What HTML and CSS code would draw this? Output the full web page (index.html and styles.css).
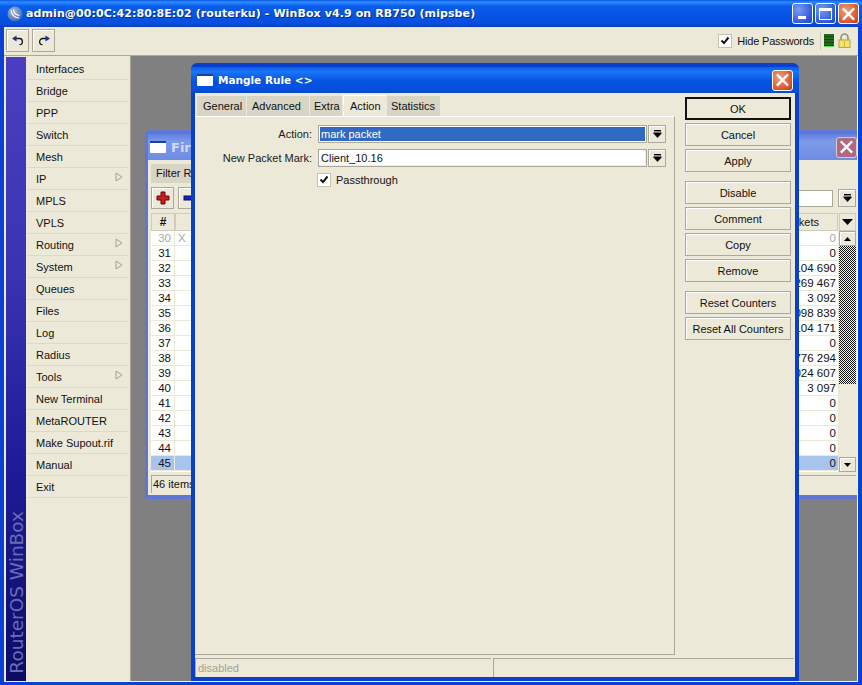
FILE: index.html
```html
<!DOCTYPE html>
<html lang="en">
<head>
<meta charset="utf-8">
<title>WinBox</title>
<link rel="stylesheet" href="styles.css">
</head>
<body>
<svg class="defs" width="0" height="0" aria-hidden="true">
  <symbol id="drop" viewBox="0 0 9 9"><rect x="1" y="0" width="7" height="1.4" fill="#000"/><path d="M0.5 2.6h8v1L4.5 8 .5 3.6z" fill="#000"/></symbol>
  <symbol id="sub" viewBox="0 0 8 10"><path d="M1 1l6 4-6 4z" fill="none" stroke="#a5a294"/></symbol>
  <symbol id="tick" viewBox="0 0 12 12"><path d="M2.5 5.500l2.500 2.600 4.500-5.600" fill="none" stroke="#111" stroke-width="2"/></symbol>
  <symbol id="win" viewBox="0 0 16 12"><rect width="16" height="12" rx="1" fill="#fff"/><rect width="16" height="2" fill="#1c3f9c"/></symbol>
  <symbol id="x" viewBox="0 0 20 20"><path d="M5 5l10 10M15 5L5 15" stroke="#fff" stroke-width="2.600" stroke-linecap="square"/></symbol>
</svg>
<div class="app">
  <header class="maintitle">
    <svg class="logo" width="16" height="16" viewBox="0 0 16 16"><defs><radialGradient id="lg" cx="40%" cy="35%" r="70%"><stop offset="0" stop-color="#a9c2ea"/><stop offset="1" stop-color="#3f62a8"/></radialGradient></defs><circle cx="8" cy="8" r="7.500" fill="url(#lg)"/><path d="M4 4c0 4 3 7.500 8 8M6.500 3.500c.2 3 2.200 5.500 6 6" fill="none" stroke="#fff" stroke-width="1.200"/></svg>
    <span class="maintitle-text">admin@00:0C:42:80:8E:02 (routerku) - WinBox v4.9 on RB750 (mipsbe)</span>
    <span class="capbtns">
      <span class="capbtn blue"><span class="min-glyph"></span></span>
      <span class="capbtn blue"><span class="max-glyph"></span></span>
      <span class="capbtn red"><svg width="20" height="20"><use href="#x"/></svg></span>
    </span>
  </header>
  <div class="toolbar">
    <button class="toolbtn"><svg width="14" height="14" viewBox="0 0 14 14"><path d="M4 4.500h4a3 3 0 0 1 .5 6.200" fill="none" stroke="#111" stroke-width="1.300"/><path d="M1 4.500L5.500 1.500v6z" fill="#1a2f8f"/></svg></button>
    <button class="toolbtn"><svg width="14" height="14" viewBox="0 0 14 14"><path d="M10 4.500H6a3 3 0 0 0-.5 6.200" fill="none" stroke="#111" stroke-width="1.300"/><path d="M13 4.500L8.500 1.500v6z" fill="#1a2f8f"/></svg></button>
    <span class="hide-pass">
      <span class="check"><svg width="12" height="12"><use href="#tick"/></svg></span>
      <span class="hide-label">Hide Passwords</span>
    </span>
    <span class="tool-sep"></span>
    <span class="meter"></span>
    <svg class="lock" width="13" height="15" viewBox="0 0 13 15"><path d="M3 7V4.500a3.500 3.500 0 0 1 7 0V7" fill="none" stroke="#8f8f80" stroke-width="1.600"/><rect x="1" y="7" width="11" height="7.500" fill="#f4e46a" stroke="#b3a552"/><rect x="6" y="7.500" width="1" height="7" fill="#c9b84a"/></svg>
  </div>
  <div class="mainbody">
    <aside class="band"><span class="band-text">RouterOS WinBox</span></aside>
    <nav class="menu">
      <div class="menu-item">Interfaces</div>
      <div class="menu-item">Bridge</div>
      <div class="menu-item">PPP</div>
      <div class="menu-item">Switch</div>
      <div class="menu-item">Mesh</div>
      <div class="menu-item">IP<svg class="sub" width="8" height="10"><use href="#sub"/></svg></div>
      <div class="menu-item">MPLS</div>
      <div class="menu-item">VPLS</div>
      <div class="menu-item">Routing<svg class="sub" width="8" height="10"><use href="#sub"/></svg></div>
      <div class="menu-item">System<svg class="sub" width="8" height="10"><use href="#sub"/></svg></div>
      <div class="menu-item">Queues</div>
      <div class="menu-item">Files</div>
      <div class="menu-item">Log</div>
      <div class="menu-item">Radius</div>
      <div class="menu-item">Tools<svg class="sub" width="8" height="10"><use href="#sub"/></svg></div>
      <div class="menu-item">New Terminal</div>
      <div class="menu-item">MetaROUTER</div>
      <div class="menu-item">Make Supout.rif</div>
      <div class="menu-item">Manual</div>
      <div class="menu-item">Exit</div>
    </nav>
    <main class="desktop">
      <section class="window firewall">
        <div class="wintitle fw-title">
          <svg width="16" height="12"><use href="#win"/></svg>
          <span>Firewall</span>
          <span class="closebtn faded"><svg width="20" height="20"><use href="#x"/></svg></span>
        </div>
        <div class="fw-body">
          <div class="fw-tabs"><span class="fw-tab">Filter Rules</span></div>
          <div class="fw-tools">
            <button class="fw-btn"><svg width="14" height="14" viewBox="0 0 14 14"><path d="M5 1h4v4h4v4H9v4H5V9H1V5h4z" fill="#d01818" stroke="#5a0a0a"/></svg></button>
            <button class="fw-btn"><svg width="14" height="14" viewBox="0 0 14 14"><rect x="1" y="5" width="12" height="4" fill="#1820c8" stroke="#0a0f60"/></svg></button>
            <span class="fw-find"></span>
            <span class="dropbtn"><svg width="9" height="9"><use href="#drop"/></svg></span>
          </div>
          <div class="fw-table">
            <div class="fw-head">
              <span class="col-num hcell">#</span>
              <span class="col-mid hcell"></span>
              <span class="col-pk hcell">Packets</span>
              <span class="col-menu hcell"><svg width="11" height="7" viewBox="0 0 11 7"><path d="M0 0h11L5.500 6z"/></svg></span>
            </div>
            <div class="fw-rows">
              <div class="fw-list">
                <div class="row off"><span class="col-num">30</span><span class="col-mid">X</span><span class="col-pk">0</span></div>
                <div class="row"><span class="col-num">31</span><span class="col-mid"></span><span class="col-pk">0</span></div>
                <div class="row"><span class="col-num">32</span><span class="col-mid"></span><span class="col-pk">104 690</span></div>
                <div class="row"><span class="col-num">33</span><span class="col-mid"></span><span class="col-pk">269 467</span></div>
                <div class="row"><span class="col-num">34</span><span class="col-mid"></span><span class="col-pk">3 092</span></div>
                <div class="row"><span class="col-num">35</span><span class="col-mid"></span><span class="col-pk">098 839</span></div>
                <div class="row"><span class="col-num">36</span><span class="col-mid"></span><span class="col-pk">104 171</span></div>
                <div class="row"><span class="col-num">37</span><span class="col-mid"></span><span class="col-pk">0</span></div>
                <div class="row"><span class="col-num">38</span><span class="col-mid"></span><span class="col-pk">776 294</span></div>
                <div class="row"><span class="col-num">39</span><span class="col-mid"></span><span class="col-pk">024 607</span></div>
                <div class="row"><span class="col-num">40</span><span class="col-mid"></span><span class="col-pk">3 097</span></div>
                <div class="row"><span class="col-num">41</span><span class="col-mid"></span><span class="col-pk">0</span></div>
                <div class="row"><span class="col-num">42</span><span class="col-mid"></span><span class="col-pk">0</span></div>
                <div class="row"><span class="col-num">43</span><span class="col-mid"></span><span class="col-pk">0</span></div>
                <div class="row"><span class="col-num">44</span><span class="col-mid"></span><span class="col-pk">0</span></div>
                <div class="row sel"><span class="col-num">45</span><span class="col-mid"></span><span class="col-pk">0</span></div>
              </div>
              <div class="scrollbar">
                <span class="sb-btn"><svg width="7" height="4" viewBox="0 0 7 4"><path d="M3.500 0L7 4H0z"/></svg></span>
                <span class="sb-hatch"></span>
                <span class="sb-track"></span>
                <span class="sb-btn"><svg width="7" height="4" viewBox="0 0 7 4"><path d="M0 0h7L3.500 4z"/></svg></span>
              </div>
            </div>
          </div>
          <div class="fw-status"><span class="fw-count">46 items</span></div>
        </div>
      </section>

      <section class="window mangle">
        <div class="wintitle">
          <svg width="16" height="12"><use href="#win"/></svg>
          <span>Mangle Rule &lt;&gt;</span>
          <span class="closebtn"><svg width="20" height="20"><use href="#x"/></svg></span>
        </div>
        <div class="mangle-body">
          <div class="mangle-main">
            <div class="mangle-left">
              <div class="tabs">
                <span class="tab">General</span>
                <span class="tab">Advanced</span>
                <span class="tab">Extra</span>
                <span class="tab active">Action</span>
                <span class="tab">Statistics</span>
              </div>
              <div class="panel">
                <div class="form">
                  <label class="flabel">Action:</label>
                  <span class="field selected">mark packet</span>
                  <span class="dropbtn"><svg width="9" height="9"><use href="#drop"/></svg></span>
                  <label class="flabel">New Packet Mark:</label>
                  <span class="field">Client_10.16</span>
                  <span class="dropbtn"><svg width="9" height="9"><use href="#drop"/></svg></span>
                  <span class="pass">
                    <span class="check"><svg width="12" height="12"><use href="#tick"/></svg></span>
                    <span>Passthrough</span>
                  </span>
                </div>
              </div>
            </div>
            <div class="actions">
              <button class="btn default">OK</button>
              <button class="btn">Cancel</button>
              <button class="btn">Apply</button>
              <button class="btn gap">Disable</button>
              <button class="btn">Comment</button>
              <button class="btn">Copy</button>
              <button class="btn">Remove</button>
              <button class="btn gap">Reset Counters</button>
              <button class="btn">Reset All Counters</button>
            </div>
          </div>
          <div class="status">
            <span class="status-cell first">disabled</span>
            <span class="status-cell second"></span>
          </div>
        </div>
      </section>
    </main>
  </div>
</div>
</body>
</html>
```

FILE: styles.css
```css
* { box-sizing: border-box; }
html, body { margin: 0; padding: 0; }
body {
  width: 862px; height: 685px; overflow: hidden;
  font: 11px "Liberation Sans", Arial, sans-serif;
  color: #111;
  background: #0a3fd0;
}
.defs { position: absolute; }
.app {
  width: 862px; height: 685px;
  display: flex; flex-direction: column;
  padding: 0 4px 3px 4px;
  background: #0a40d6;
}
.maintitle {
  height: 27px; margin: 0 -4px;
  padding: 0 3px 0 7px;
  display: flex; align-items: center; gap: 3px;
  background: linear-gradient(#0a58e6, #2f8bff 8%, #0a5eea 22%, #0553e2 60%, #0750e0 85%, #0a3fc0);
  color: #fff;
}
.maintitle-text {
  font: bold 11px "DejaVu Sans", sans-serif;
  letter-spacing: 0.1px;
  text-shadow: 1px 1px 0 #0a2a90;
  white-space: nowrap;
}
.capbtns { margin-left: auto; display: flex; gap: 2px; }
.capbtn {
  width: 21px; height: 21px;
  border: 1px solid #fff; border-radius: 3px;
  display: flex; align-items: center; justify-content: center;
  position: relative;
}
.capbtn.blue { background: radial-gradient(circle at 30% 30%, #7a9cf0, #2c55d8 75%, #2346c0); }
.capbtn.red { background: radial-gradient(circle at 35% 35%, #f0a080, #dc5a30 65%, #b83a1a); }
.min-glyph { width: 8px; height: 3px; background: #fff; position: absolute; left: 5px; bottom: 4px; }
.max-glyph { width: 13px; height: 12px; border: 1px solid #fff; border-top-width: 3px; }

.toolbar {
  height: 29px;
  padding: 2px 7px 3px 2px;
  display: flex; align-items: center; gap: 3px;
  background: #ece9d8;
  border-bottom: 1px solid #aca899;
}
.toolbtn {
  width: 23px; height: 23px; padding: 0;
  display: flex; align-items: center; justify-content: center;
  background: #ece9d8;
  border: 1px solid #aca899;
  box-shadow: inset 1px 1px 0 #fff;
}
.hide-pass { margin-left: auto; display: flex; align-items: center; gap: 6px; }
.hide-label { letter-spacing: -0.2px; }
.check {
  width: 12px; height: 12px;
  display: inline-flex;
  background: #fff;
  outline: 1px solid #c5c2b2;
}
.tool-sep { width: 1px; height: 18px; background: #d0cdbc; margin: 0 0 0 3px; }
.meter {
  width: 10px; height: 13px; margin-right: 1px;
  background: repeating-linear-gradient(#1f6a1f 0 2px, #124d12 2px 3px);
  border-bottom: 1px solid #5fe05f;
}
.mainbody {
  flex: 1; min-height: 0;
  display: flex;
  padding-left: 2px;
  background: #ece9d8;
  border-right: 1px solid #f6f4ea;
  border-bottom: 1px solid #f6f4ea;
}
.band {
  width: 20px; margin-top: 1px;
  display: flex; flex-direction: column; justify-content: flex-end; align-items: center;
  padding-bottom: 7px;
  background: linear-gradient(#4a3fc2, #3a33b0 35%, #1e1c98 65%, #0c0c66);
}
.band-text {
  writing-mode: vertical-rl; transform: rotate(180deg);
  font: 18.500px "DejaVu Sans", sans-serif;
  color: #6a6cb6;
  white-space: nowrap;
}
.menu {
  width: 105px;
  padding-top: 2px;
  border-right: 1px solid #aca899;
  background: #ece9d8;
}
.menu-item {
  height: 22px; margin: 0 2px 0 1px;
  padding: 0 0 0 9px;
  display: flex; align-items: center;
  border-bottom: 1px solid #dcd9c8;
  position: relative;
}
.sub { position: absolute; right: 5px; top: 4px; }
.desktop {
  flex: 1; min-width: 0;
  position: relative; overflow: hidden;
  background: #808080;
}
.window { position: absolute; display: flex; flex-direction: column; }
.wintitle {
  height: 26px; flex: none;
  display: flex; align-items: center; gap: 5px;
  padding: 0 2px 0 2px;
  font: bold 10.500px "DejaVu Sans", sans-serif;
  color: #fff;
  white-space: nowrap;
}
.closebtn {
  margin-left: auto;
  width: 21px; height: 21px;
  border: 1px solid #fff; border-radius: 3px;
  display: flex; align-items: center; justify-content: center;
  background: radial-gradient(circle at 35% 35%, #f0a080, #dc5a30 65%, #b83a1a);
}
.closebtn.faded { background: #b0697f; border-color: #d8c8d8; }

.firewall {
  left: 14px; top: 74px; width: 715px; height: 369px;
  background: #5f76d6;
  border: solid #5f76d6; border-width: 4px 0 4px 3px;
  border-radius: 6px 0 0 0;
}
.fw-title {
  background: linear-gradient(#5f80e0, #7d9aea 30%, #6f8ce4);
  color: #cfd9f4;
  padding-right: 3px;
  font-size: 13px;
}
.fw-body { flex: 1; min-height: 0; background: #ece9d8; display: flex; flex-direction: column; padding: 0 4px 0 3px; }
.fw-tabs { height: 25px; padding-top: 4px; flex: none; }
.fw-tab { display: inline-block; width: 80px; height: 19px; line-height: 19px; padding-left: 5px; background: #d8d5c5; }
.fw-tools { height: 26px; flex: none; display: flex; align-items: center; gap: 4px; }
.fw-btn {
  width: 23px; height: 22px; padding: 0;
  display: flex; align-items: center; justify-content: center;
  background: #ece9d8; border: 1px solid #aca899; box-shadow: inset 1px 1px 0 #fff;
}
.fw-find { margin-left: auto; width: 500px; height: 17px; background: #fff; border: 1px solid #aca899; }
.fw-table { margin-top: 2px; flex: none; }
.fw-head { display: flex; height: 18px; }
.hcell {
  height: 18px; line-height: 16px;
  background: #ece9d8; border: 1px solid #cfccbc;
  display: block;
}
.col-num { width: 24px; flex: none; text-align: right; padding-right: 3px; }
.hcell.col-num { text-align: center; padding: 0; font-weight: bold; font-size: 12px; }
.col-mid { flex: 1; min-width: 0; padding-left: 3px; }
.col-pk { width: 300px; flex: none; text-align: right; padding-right: 2px; white-space: nowrap; font-size: 11.500px; }
.hcell.col-pk { padding-right: 18px; font-size: 11px; }
.col-menu { width: 17px; flex: none; margin-left: 1px; text-align: center; }
.fw-rows { display: flex; height: 241px; }
.fw-list { flex: 1; min-width: 0; background: #fff; }
.row { display: flex; height: 15px; line-height: 14px; border-bottom: 1px solid #ece9d8; font-size: 11.500px; }
.row .col-num { border-right: 1px solid #ece9d8; }
.row.off { color: #a8a8a8; }
.row.sel { background: #a9c4ec; }
.scrollbar { width: 17px; margin-left: 1px; flex: none; display: flex; flex-direction: column; }
.sb-btn {
  height: 15px; flex: none;
  display: flex; align-items: center; justify-content: center;
  background: #ece9d8; border: 1px solid #aca899; box-shadow: inset 1px 1px 0 #fff;
}
.sb-hatch {
  height: 138px; flex: none;
  background: repeating-conic-gradient(#111 0 25%, #f4f2e8 0 50%) 0 0 / 2px 2px;
}
.sb-track { flex: 1; background: #ece9d8; }
.fw-status { height: 19px; margin-top: 3px; flex: none; }
.fw-count { display: block; height: 18px; line-height: 17px; padding-left: 1px; border: 1px solid #aca899; border-width: 1px 0 0 1px; }

.mangle {
  left: 60px; top: 7px; width: 608px; height: 618px;
  background: #0a3fd0;
  border: 4px solid #0840cc;
  border-radius: 6px 6px 0 0;
}
.mangle .wintitle {
  background: linear-gradient(#0a5eea, #1b74f8 18%, #0553e2 55%, #0450de 85%, #0a48cc);
  margin: 0 -4px;
  padding-left: 6px; padding-right: 6px;
}
.mangle-body { flex: 1; min-height: 0; background: #ece9d8; display: flex; flex-direction: column; }
.mangle-main { flex: 1; min-height: 0; display: flex; gap: 10px; }
.mangle-left { width: 480px; display: flex; flex-direction: column; padding-top: 3px; }
.tabs { display: flex; gap: 1px; height: 20px; flex: none; padding-left: 2px; }
.tab {
  padding: 0 4px; line-height: 20px;
  background: #d8d5c5;
}
.tab:nth-child(1) { width: 49px; padding-left: 6px; }
.tab:nth-child(2) { width: 62px; padding-left: 5px; }
.tab:nth-child(3) { width: 32px; }
.tab:nth-child(4) { width: 43px; padding-left: 6px; }
.tab:nth-child(5) { width: 53px; }
.tab.active { background: #ece9d8; margin-top: -1px; height: 21px; border-top: 1px solid #fff; border-left: 1px solid #fff; }
.panel {
  flex: 1; min-height: 0;
  border-right: 1px solid #aca899; border-bottom: 1px solid #aca899; border-top: 1px solid #fff;
  padding-top: 8px;
}
.form {
  display: grid;
  grid-template-columns: 123px 329px 19px;
  grid-auto-rows: min-content;
  row-gap: 6px;
  align-items: center;
}
.flabel { text-align: right; padding-right: 6px; color: #1a1a1a; }
.field {
  height: 18px; line-height: 16px; padding-left: 2px;
  background: #fff;
  border: 1px solid #aca899;
  box-shadow: inset -1px -1px 0 #f2f0e4;
}
.field.selected { background: #316ac5; color: #fff; box-shadow: inset 0 0 0 1px #fff; }
.dropbtn {
  width: 18px; height: 18px; margin-left: 1px; flex: none;
  display: flex; align-items: center; justify-content: center;
  background: #ece9d8; border: 1px solid #aca899; box-shadow: inset 1px 1px 0 #fff;
}
.pass { grid-column: 2 / 4; display: flex; align-items: center; gap: 6px; margin-top: 1px; }
.actions { width: 106px; flex: none; padding-top: 4px; display: flex; flex-direction: column; gap: 3px; }
.btn {
  height: 23px; flex: none; padding: 0;
  font: inherit; color: #111; white-space: nowrap;
  background: #ece9d8;
  border: 1px solid #aca899;
  box-shadow: inset 1px 1px 0 #fff;
}
.btn.default { border: 2px solid #111; box-shadow: none; }
.btn.gap { margin-top: 6px; }
.status { height: 22px; flex: none; padding: 3px 1px 0 0; display: flex; gap: 2px; }
.status-cell { border-top: 1px solid #aca899; border-left: 1px solid #aca899; height: 19px; line-height: 18px; }
.status-cell.first { width: 296px; padding-left: 2px; color: #a5a294; }
.status-cell.second { flex: 1; }
```
